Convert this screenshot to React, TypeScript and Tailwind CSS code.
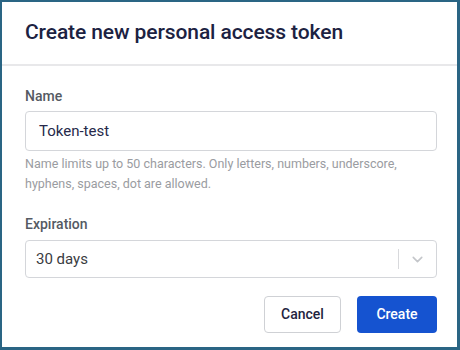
import { ChevronDown } from "lucide-react";

export default function App() {
  return (
    <div className="h-[350px] w-[460px] bg-white font-['Roboto',sans-serif]">
      <div className="flex h-full w-full flex-col border-2 border-r-[3px] border-b-[3px] border-[#2a6584] bg-white">
        {/* Header */}
        <div className="flex h-[64px] items-center border-b-2 border-[#e8e8ea] px-[23px]">
          <h2 className="text-[21px] font-medium tracking-[-0.1px] text-[#1c2242]">
            Create new personal access token
          </h2>
        </div>

        {/* Body */}
        <div className="flex flex-col pl-[23px] pr-[20px] pt-[20px]">
          <label className="text-[14px] font-medium leading-[20px] text-[#555a63]">Name</label>
          <div className="mt-[5px] flex h-[40px] items-center rounded-[4px] border border-[#d4d6da] px-[13px]">
            <span className="text-[15px] text-[#26294a]">Token-test</span>
          </div>
          <p className="mt-[3px] text-[12.5px] leading-[20px] text-[#9a9ca1]">
            Name limits up to 50 characters. Only letters, numbers, underscore,
            <br />
            hyphens, spaces, dot are allowed.
          </p>

          <label className="mt-[20px] text-[14px] font-medium leading-[20px] text-[#555a63]">
            Expiration
          </label>
          <div className="mt-[6px] flex h-[38px] items-center rounded-[4px] border border-[#d4d6da] pl-[10px]">
            <span className="flex-1 text-[15px] text-[#3a3c42]">30 days</span>
            <span className="h-[20px] w-px bg-[#d8d9dc]" />
            <span className="flex w-[37px] items-center justify-center">
              <ChevronDown className="h-[17px] w-[17px] text-[#c4c6ca]" strokeWidth={2.25} />
            </span>
          </div>

          <div className="mt-[18px] flex justify-end gap-[16px]">
            <button
              type="button"
              className="h-[37px] w-[77px] rounded-[4px] border border-[#cfd1d5] bg-white text-[14px] font-medium text-[#1f2440]"
            >
              Cancel
            </button>
            <button
              type="button"
              className="h-[37px] w-[80px] rounded-[4px] bg-[#1553d0] text-[14px] font-medium text-white"
            >
              Create
            </button>
          </div>
        </div>
      </div>
    </div>
  );
}
